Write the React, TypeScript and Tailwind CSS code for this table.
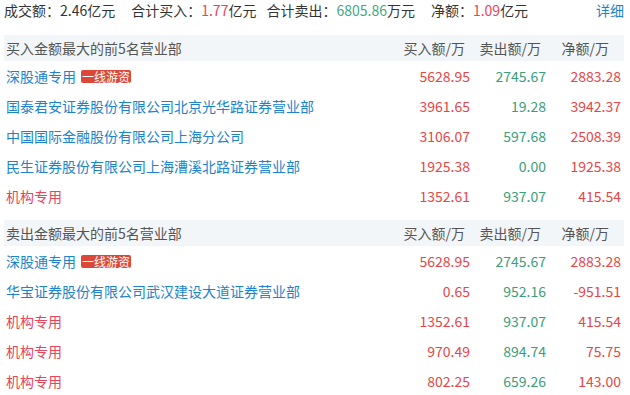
import React from "react";

interface Row {
  name: string;
  tag?: string;
  buy: string;
  sell: string;
  net: string;
  inst?: boolean;
}

const buyRows: Row[] = [
  { name: "深股通专用", tag: "一线游资", buy: "5628.95", sell: "2745.67", net: "2883.28" },
  { name: "国泰君安证券股份有限公司北京光华路证券营业部", buy: "3961.65", sell: "19.28", net: "3942.37" },
  { name: "中国国际金融股份有限公司上海分公司", buy: "3106.07", sell: "597.68", net: "2508.39" },
  { name: "民生证券股份有限公司上海漕溪北路证券营业部", buy: "1925.38", sell: "0.00", net: "1925.38" },
  { name: "机构专用", inst: true, buy: "1352.61", sell: "937.07", net: "415.54" },
];

const sellRows: Row[] = [
  { name: "深股通专用", tag: "一线游资", buy: "5628.95", sell: "2745.67", net: "2883.28" },
  { name: "华宝证券股份有限公司武汉建设大道证券营业部", buy: "0.65", sell: "952.16", net: "-951.51" },
  { name: "机构专用", inst: true, buy: "1352.61", sell: "937.07", net: "415.54" },
  { name: "机构专用", inst: true, buy: "970.49", sell: "894.74", net: "75.75" },
  { name: "机构专用", inst: true, buy: "802.25", sell: "659.26", net: "143.00" },
];

const Section: React.FC<{ title: string; rows: Row[]; className?: string }> = ({
  title,
  rows,
  className,
}) => (
  <div className={className}>
    {/* header bar */}
    <div className="flex h-[26px] items-center bg-[#f3f6f9] text-[#555]">
      <div className="flex-1 pl-[2px]">{title}</div>
      <div className="w-[80px] pr-[5px] text-right">买入额/万</div>
      <div className="w-[76px] pr-[5px] text-right">卖出额/万</div>
      <div className="w-[78px] pr-[15px] text-right">净额/万</div>
    </div>
    {rows.map((r, i) => (
      <div key={i} className="flex h-[30px] items-center">
        <div className="flex flex-1 items-center pl-[2px]">
          <span className={r.inst ? "text-[#e8445a]" : "text-[#1a84cc]"}>{r.name}</span>
          {r.tag && (
            <span className="ml-[5px] rounded-[2px] bg-[#dc4837] px-[1px] text-[12px] leading-[13px] text-white">
              {r.tag}
            </span>
          )}
        </div>
        <div className="w-[80px] text-right text-[#e84545]">{r.buy}</div>
        <div className="w-[76px] text-right text-[#3a9e7a]">{r.sell}</div>
        <div className="w-[78px] pr-[3px] text-right text-[#e84545]">{r.net}</div>
      </div>
    ))}
  </div>
);

export default function App() {
  return (
    <div
      className="w-[630px] bg-white pl-[4px] pr-[6px] text-[14px] leading-[20px] text-[#333]"
      style={{ fontFamily: '"Noto Sans CJK SC", "Noto Sans", sans-serif' }}
    >
      <div className="flex h-[20px] items-center">
        <div className="flex-1">
          <span className="mr-[16px]">成交额：2.46亿元</span>
          <span className="mr-[10px]">
            合计买入：<span className="text-[#e8445a]">1.77</span>亿元
          </span>
          <span className="mr-[16px]">
            合计卖出：<span className="text-[#3fa882]">6805.86</span>万元
          </span>
          <span>
            净额：<span className="text-[#e8445a]">1.09</span>亿元
          </span>
        </div>
        <div className="text-[#1a84cc]">详细</div>
      </div>
      <Section title="买入金额最大的前5名营业部" rows={buyRows} className="mt-[15px]" />
      <Section title="卖出金额最大的前5名营业部" rows={sellRows} className="mt-[9px]" />
    </div>
  );
}
